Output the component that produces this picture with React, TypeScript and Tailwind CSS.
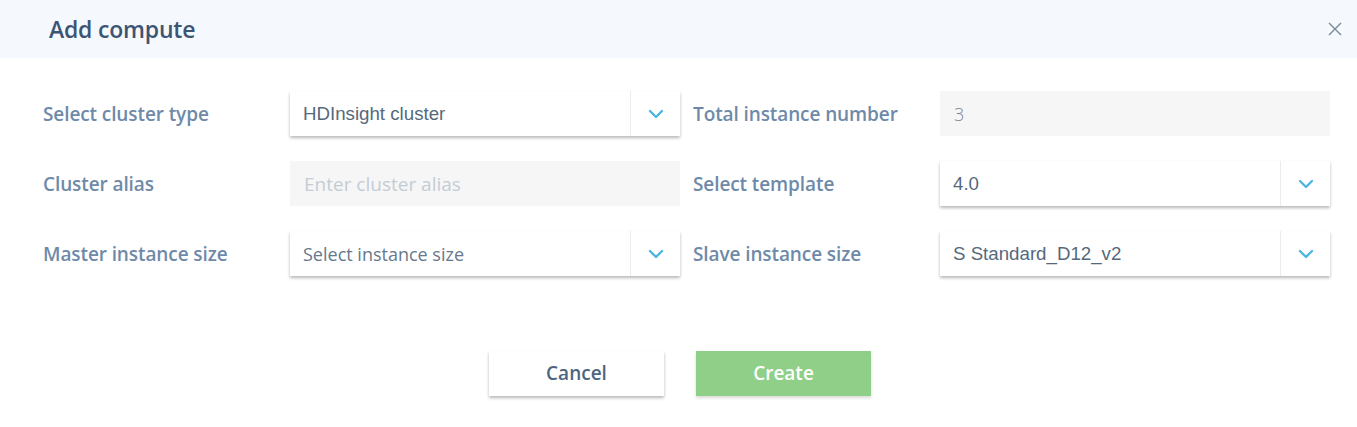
import React from 'react'

const label = 'text-[19px] font-semibold text-[#6e8aa8] tracking-[-0.1px]'

function Chevron() {
  return (
    <svg width="16" height="10" viewBox="0 0 16 10" fill="none">
      <path d="M2 2l6 6 6-6" stroke="#4db6e2" strokeWidth="2.4" strokeLinecap="round" strokeLinejoin="round" />
    </svg>
  )
}

function Select({ value, placeholder }: { value: string; placeholder?: boolean }) {
  return (
    <div className="flex h-[45px] w-[390px] items-stretch bg-white shadow-[0_2px_3px_rgba(0,0,0,0.28)]">
      <div
        className={
          placeholder
            ? "flex flex-1 items-center pl-[13px] pt-px text-[18px] text-[#66798c] [font-family:'Open_Sans',sans-serif]"
            : "flex flex-1 items-center pl-[13px] pt-px text-[18.7px] text-[#55697b] [font-family:'Liberation_Sans',Arial,sans-serif]"
        }
      >
        {value}
      </div>
      <div className="flex w-[50px] items-center justify-center border-l border-[#ececec]">
        <Chevron />
      </div>
    </div>
  )
}

function Input({ value, placeholder }: { value?: string; placeholder?: string }) {
  return (
    <div className="flex h-[45px] w-[390px] items-center bg-[#f6f6f6] pl-[14px] pt-px [font-family:'Open_Sans',sans-serif]">
      {value ? (
        <span className="text-[18px] font-light text-[#7b8796]">{value}</span>
      ) : (
        <span className="text-[19px] font-normal text-[#c4ccd5]">{placeholder}</span>
      )}
    </div>
  )
}

export default function App() {
  return (
    <div className="min-h-screen w-[1357px] bg-white [font-family:'Open_Sans',sans-serif]">
      <header className="flex h-[58px] items-center justify-between bg-[#f5f9fe] pl-[49px] pr-[14px]">
        <h1 className="text-[23px] font-semibold text-[#3d5573] tracking-[-0.2px]">Add compute</h1>
        <svg width="16" height="16" viewBox="0 0 16 16" fill="none">
          <path d="M2 2l12 12M14 2L2 14" stroke="#7a8896" strokeWidth="1.4" />
        </svg>
      </header>

      <div className="grid grid-cols-[247px_390px_13px_247px_390px] gap-y-[25px] pl-[43px] pt-[33px]">
        <div className={`${label} flex items-center pt-px`}>Select cluster type</div>
        <Select value="HDInsight cluster" />
        <div />
        <div className={`${label} flex items-center pt-px`}>Total instance number</div>
        <Input value="3" />

        <div className={`${label} flex items-center pt-px`}>Cluster alias</div>
        <Input placeholder="Enter cluster alias" />
        <div />
        <div className={`${label} flex items-center pt-px`}>Select template</div>
        <Select value="4.0" />

        <div className={`${label} flex items-center pt-px`}>Master instance size</div>
        <Select value="Select instance size" placeholder />
        <div />
        <div className={`${label} flex items-center pt-px`}>Slave instance size</div>
        <Select value="S Standard_D12_v2" />
      </div>

      <div className="mt-[75px] flex justify-center gap-[32px] pl-[3px]">
        <button className="h-[45px] w-[175px] bg-white text-[19px] font-semibold text-[#4c6580] shadow-[0_2px_3px_rgba(0,0,0,0.28)]">
          Cancel
        </button>
        <button className="h-[45px] w-[175px] bg-[#90cf87] text-[19px] font-semibold text-white shadow-[0_2px_3px_rgba(0,0,0,0.15)]">
          Create
        </button>
      </div>
    </div>
  )
}
